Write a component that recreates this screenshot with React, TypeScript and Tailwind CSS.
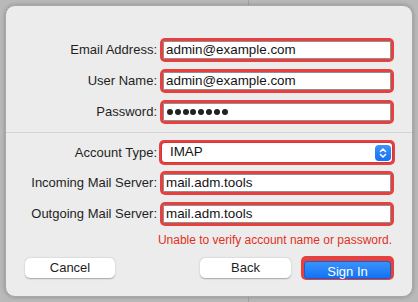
function Field({ children }: { children: React.ReactNode }) {
    return (
        <div className="h-[24px] w-[234px] rounded-[5px] bg-[#e8403f] p-[3px]">
            <div className="flex h-full items-center border border-[#8f8f8f] bg-white pl-[2px] text-[13.4px] text-[#141414]">
                {children}
            </div>
        </div>
    );
}

function Row({ label, children }: { label: string; children: React.ReactNode }) {
    return (
        <div className="flex items-center">
            <div className="w-[151px] text-right text-[13px] text-[#1f1f1f]">{label}</div>
            <div className="ml-[3px]">{children}</div>
        </div>
    );
}

function PasswordDots({ count }: { count: number }) {
    return (
        <div className="flex gap-[1.8px] pl-[1px]">
            {Array.from({ length: count }).map((_, i) => (
                <span key={i} className="h-[6px] w-[6px] rounded-full bg-[#222]" />
            ))}
        </div>
    );
}

export default function App() {
    return (
        <div
            className="relative h-[302px] w-[418px] bg-[#b9b9b9] p-[5px]"
            style={{ fontFamily: '"Liberation Sans", Arial, sans-serif' }}
        >
            {/* divider of the window behind the sheet */}
            <div className="absolute left-[248px] top-0 h-full w-px bg-[#a3a3a3]" />

            <div className="relative h-[292px] rounded-[10px] border border-[#a8a8a8] bg-[#ececec] pt-[32px] shadow-[0_0_4px_rgba(0,0,0,0.25)]">
                <div className="flex flex-col gap-[7px]">
                    <Row label="Email Address:">
                        <Field>admin@example.com</Field>
                    </Row>
                    <Row label="User Name:">
                        <Field>admin@example.com</Field>
                    </Row>
                    <Row label="Password:">
                        <Field>
                            <PasswordDots count={8} />
                        </Field>
                    </Row>
                </div>

                <div className="mt-[8px] h-px bg-[#d3d3d3]" />

                <div className="mt-[7px] flex flex-col">
                    <div className="flex items-center">
                        <div className="w-[151px] text-right text-[13px] text-[#1f1f1f]">Account Type:</div>
                        <div className="ml-[2px] h-[25px] w-[236px] rounded-[5px] bg-[#e8403f] p-[3px]">
                            <div className="flex h-full items-center justify-between rounded-[3px] bg-white pl-[8px] pr-[1px] text-[13.4px] text-[#141414] shadow-[0_0_0_0.5px_rgba(0,0,0,0.25)]">
                                <span>IMAP</span>
                                <span className="flex h-[16px] w-[16px] items-center justify-center rounded-[4px] bg-gradient-to-b from-[#3d93f8] to-[#1670f3]">
                                    <svg width="10" height="12" viewBox="0 0 10 12" fill="none" stroke="white" strokeWidth="1.5" strokeLinecap="round" strokeLinejoin="round">
                                        <path d="M2.5 4.5 L5 2 L7.5 4.5" />
                                        <path d="M2.5 7.5 L5 10 L7.5 7.5" />
                                    </svg>
                                </span>
                            </div>
                        </div>
                    </div>

                    <div className="mt-[6px] flex flex-col gap-[7px]">
                        <Row label="Incoming Mail Server:">
                            <Field>mail.adm.tools</Field>
                        </Row>
                        <Row label="Outgoing Mail Server:">
                            <Field>mail.adm.tools</Field>
                        </Row>
                    </div>
                </div>

                <p className="mt-[7px] pr-[20px] text-right text-[12px] leading-[15px] text-[#e2301e]">
                    Unable to verify account name or password.
                </p>

                <div className="mt-[8px] flex h-[24px] items-center pl-[19px] pr-[18px]">
                    <button className="h-[20px] w-[90px] rounded-[5px] bg-white text-[13px] text-[#1f1f1f] shadow-[0_0.5px_1.5px_rgba(0,0,0,0.3)]">
                        Cancel
                    </button>
                    <button className="ml-auto h-[20px] w-[91px] rounded-[5px] bg-white text-[13px] text-[#1f1f1f] shadow-[0_0.5px_1.5px_rgba(0,0,0,0.3)]">
                        Back
                    </button>
                    <div className="ml-[10px] h-[24px] w-[93px] rounded-[5px] bg-[#e8403f] p-[3px]">
                        <button className="h-full w-full rounded-[3px] border border-[#1d5fbf] bg-gradient-to-b from-[#3a92f9] to-[#0f72f5] text-[13px] text-white">
                            Sign In
                        </button>
                    </div>
                </div>
            </div>
        </div>
    );
}
